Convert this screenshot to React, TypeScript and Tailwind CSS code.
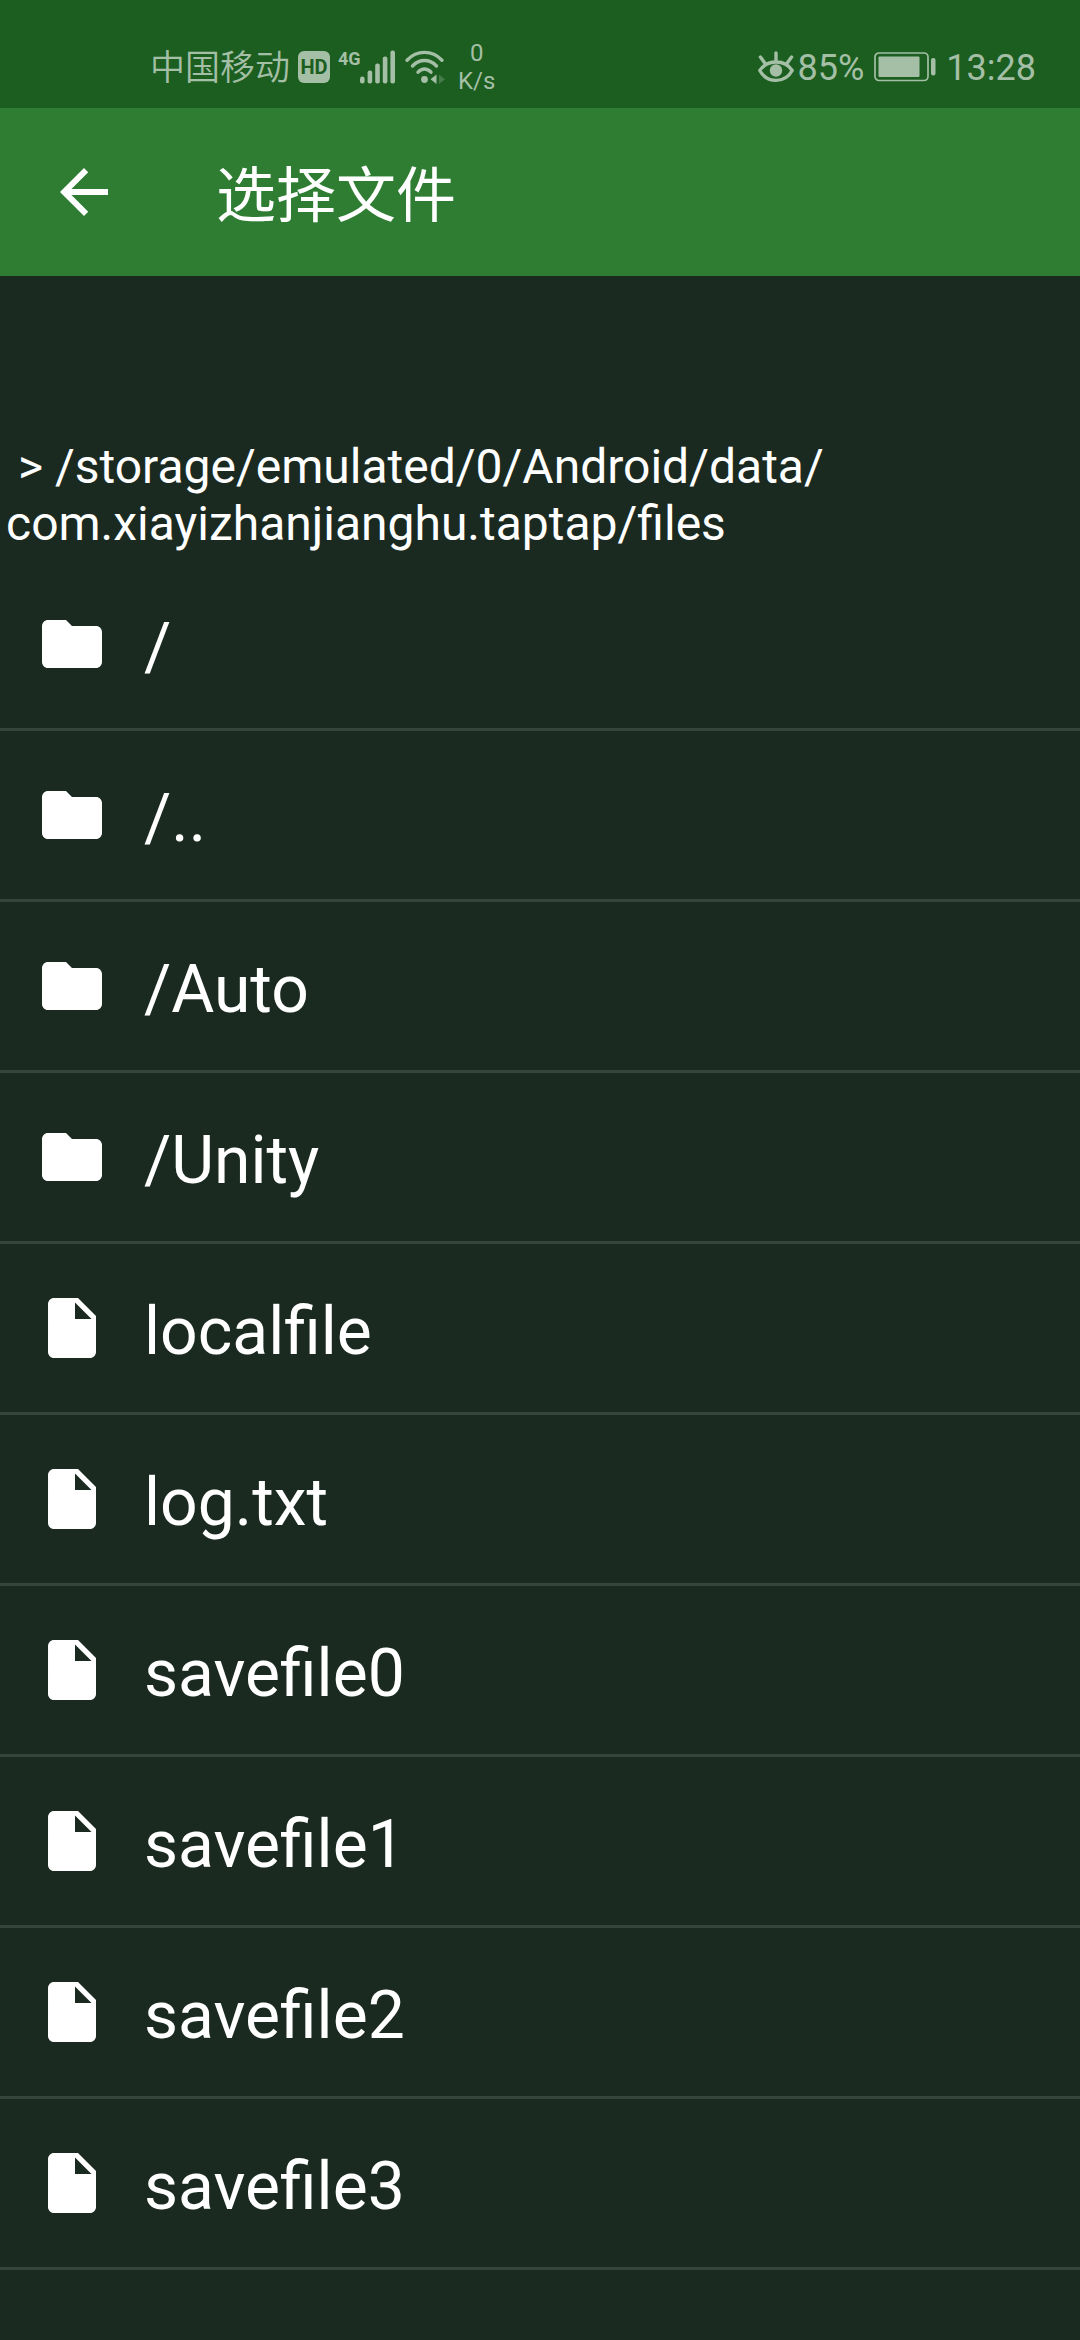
import { useState } from "react";
import { MdArrowBack, MdFolder, MdInsertDriveFile } from "react-icons/md";

interface Entry {
    name: string
    folder: boolean
}

const entries: Entry[] = [
    { name: "/", folder: true },
    { name: "/..", folder: true },
    { name: "/Auto", folder: true },
    { name: "/Unity", folder: true },
    { name: "localfile", folder: false },
    { name: "log.txt", folder: false },
    { name: "savefile0", folder: false },
    { name: "savefile1", folder: false },
    { name: "savefile2", folder: false },
    { name: "savefile3", folder: false },
]

function Signal() {
    return (
        <svg className="w-[36px] h-[34px]" viewBox="0 0 36 34" fill="currentColor">
            <rect x="0" y="26.5" width="4.6" height="7" rx="2.2" />
            <rect x="7.6" y="20.5" width="4.6" height="13" rx="2" />
            <rect x="15.2" y="13.5" width="4.6" height="20" rx="2" />
            <rect x="22.8" y="6.5" width="4.6" height="27" rx="2" />
            <rect x="30.4" y="0.5" width="4.6" height="33" rx="2" />
        </svg>
    )
}

function Wifi() {
    return (
        <svg className="w-[42px] h-[34px]" viewBox="0 0 42 34" fill="none" stroke="currentColor" strokeWidth="3.4" strokeLinecap="round">
            <path d="M3 10.2C13 -0.2 28 -0.2 38 10.2" />
            <path d="M8.5 16C15.5 8.7 25.5 8.7 32.5 16" />
            <path d="M14 22.2C18 18 23 18 27 22.2" />
            <circle cx="20.5" cy="29.5" r="3.4" fill="currentColor" stroke="none" />
            <path d="M32.5 24.5v9.5l-6-4.8z" fill="currentColor" stroke="none" />
            <path d="M35 24.5v9.5l6-4.8z" fill="currentColor" stroke="none" opacity="0.3" />
        </svg>
    )
}

function Eye() {
    return (
        <svg className="w-[36px] h-[32px]" viewBox="0 0 36 32" fill="none" stroke="currentColor" strokeWidth="3.4" strokeLinecap="round">
            <path d="M18 2v7M2.4 6l4.4 6M33.6 6l-4.4 6" />
            <path d="M1.8 19.5C9 8.2 27 8.2 34.2 19.5C27 32.6 9 32.6 1.8 19.5Z" strokeLinejoin="round" />
            <circle cx="18" cy="19.5" r="6.2" fill="currentColor" stroke="none" />
        </svg>
    )
}

function Battery() {
    return (
        <svg className="w-[62px] h-[30px]" viewBox="0 0 62 30" fill="currentColor">
            <rect x="1" y="1" width="53" height="27.5" rx="4" fill="none" stroke="currentColor" strokeWidth="1.7" />
            <rect x="4.5" y="4.5" width="41" height="20.5" rx="1" />
            <rect x="57" y="6" width="4.5" height="17.5" rx="2" />
        </svg>
    )
}

export default function SelecionarArquivo() {
    const [Selected, setselected] = useState("")

    return (
        <div className="min-h-screen bg-[#1b2a21] text-white font-[Roboto,'Noto_Sans_CJK_SC',sans-serif]">
            <div className="h-[108px] pt-[26px] pl-[150px] pr-11 bg-[#1b5e20] text-[#a4bfa6] flex items-center justify-between">
                <div className="flex items-center gap-2">
                    <span className="pt-0.5 text-[35px] leading-none font-[350]">中国移动</span>
                    <span className="w-8 h-8 rounded-md bg-[#a4bfa6] text-[#1b5e20] text-[20px] leading-none font-bold flex items-center justify-center">HD</span>
                    <div className="flex items-start">
                        <span className="w-[22px] text-[18px] leading-none font-bold text-right font-['Liberation_Sans_Narrow','Roboto',sans-serif]">4G</span>
                        <Signal />
                    </div>
                    <Wifi />
                    <span className="ml-1 text-[24px] leading-[28px] text-center">0<br />K/s</span>
                </div>
                <div className="flex items-center gap-2.5">
                    <div className="flex items-center gap-1">
                        <Eye />
                        <span className="pt-0.5 text-[36px] leading-none">85%</span>
                    </div>
                    <Battery />
                    <span className="pt-0.5 text-[36px] leading-none">13:28</span>
                </div>
            </div>
            <header className="h-[168px] px-12 bg-[#2e7d32] flex items-center gap-24">
                <button type="button" aria-label="返回" className="cursor-pointer">
                    <MdArrowBack className="size-18" />
                </button>
                <h1 className="pt-2.5 text-[60px] leading-none font-normal">选择文件</h1>
            </header>
            <main>
                <p className="pt-[162px] pb-2 px-1.5 text-[48px] leading-[57px]">&nbsp;&gt;&nbsp;/storage/emulated/0/Android/data/<wbr />com.xiayizhanjianghu.taptap/files</p>
                <ul>
                    {entries.map((entry) => (
                        <li key={entry.name} className="border-b-3 border-[#36443c]">
                            <button type="button" aria-pressed={Selected == entry.name} className="w-full h-[168px] px-9 flex items-center gap-9 text-left cursor-pointer" onClick={() => setselected(entry.name)}>
                                {entry.folder ? (
                                    <MdFolder className="size-18 shrink-0" />
                                ) : (
                                    <MdInsertDriveFile className="size-18 shrink-0" />
                                )}
                                <span className="pt-2 text-[66px] leading-none">{entry.name}</span>
                            </button>
                        </li>
                    ))}
                </ul>
            </main>
        </div>
    )
}
